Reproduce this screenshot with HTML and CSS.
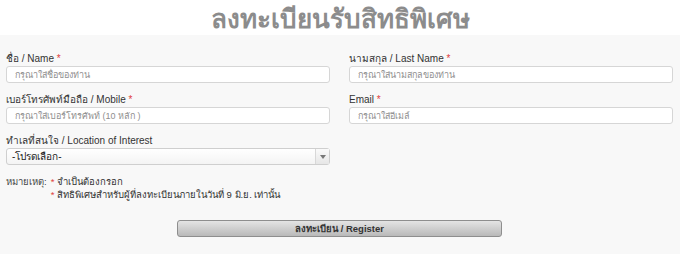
FILE: index.html
```html
<!DOCTYPE html>
<html lang="th">
<head>
<meta charset="UTF-8" />
<meta name="viewport" content="width=device-width, initial-scale=1" />
<title>ลงทะเบียนรับสิทธิพิเศษ</title>
<link rel="stylesheet" href="styles.css">
</head>
<body>

<h1 class="title">ลงทะเบียนรับสิทธิพิเศษ</h1>

<form class="reg-form">
  <div class="grid">
    <div class="field">
      <label for="fname">ชื่อ / Name <span class="req">*</span></label>
      <input type="text" id="fname" placeholder="กรุณาใส่ชื่อของท่าน" />
    </div>
    <div class="field">
      <label for="lname">นามสกุล / Last Name <span class="req">*</span></label>
      <input type="text" id="lname" placeholder="กรุณาใส่นามสกุลของท่าน" />
    </div>
    <div class="field">
      <label for="mobile">เบอร์โทรศัพท์มือถือ / Mobile <span class="req">*</span></label>
      <input type="text" id="mobile" placeholder="กรุณาใส่เบอร์โทรศัพท์ (10 หลัก )" />
    </div>
    <div class="field">
      <label for="email">Email <span class="req">*</span></label>
      <input type="text" id="email" placeholder="กรุณาใส่อีเมล์" />
    </div>
    <div class="field">
      <label for="location">ทำเลที่สนใจ / Location of Interest</label>
      <div class="select">
        <span class="select-text">-โปรดเลือก-</span>
        <span class="select-arrow"></span>
      </div>
    </div>
  </div>

  <div class="note">
    <span class="note-head">หมายเหตุ:</span>
    <div class="note-lines">
      <div><span class="req">*</span> จำเป็นต้องกรอก</div>
      <div><span class="req">*</span> สิทธิพิเศษสำหรับผู้ที่ลงทะเบียนภายในวันที่ 9 มิ.ย. เท่านั้น</div>
    </div>
  </div>

  <div class="actions">
    <button type="button" class="btn">ลงทะเบียน / Register</button>
  </div>
</form>

</body>
</html>
```

FILE: styles.css
```css
body { margin: 0; background: #f8f8f8; font-family: "Liberation Sans", Arial, sans-serif; color: #333; }
.title {
  margin: 0;
  height: 35px;
  background: #fff;
  text-align: center;
  font-family: "Liberation Serif", serif;
  font-size: 26px;
  line-height: 40px;
  font-weight: 600;
  color: #8c8c8c;
}
.reg-form { padding: 17px 7px 0 6px; }
.grid { display: grid; grid-template-columns: 1fr 1fr; column-gap: 19px; row-gap: 10px; }
.field label { display: block; font-size: 10px; line-height: 13px; margin-bottom: 1px; }
.req { color: #e0403c; }
.field input {
  display: block;
  width: 100%;
  box-sizing: border-box;
  height: 17px;
  border: 1px solid #d6d6d6;
  border-radius: 3px;
  background: #fff;
  padding: 0 8px;
  font-size: 9px;
  font-family: inherit;
}
.field input::placeholder { color: #8f8f8f; }
.select {
  display: flex;
  height: 17px;
  box-sizing: border-box;
  border: 1px solid #cfcfcf;
  border-radius: 3px;
  background: linear-gradient(#fff, #f4f4f4);
  font-size: 10px;
  align-items: stretch;
}
.select-text { flex: 1; padding-left: 5px; line-height: 15px; color: #222; }
.select-arrow {
  width: 13px;
  border-left: 1px solid #d8d8d8;
  background: linear-gradient(#fafafa, #e6e6e6);
  position: relative;
}
.select-arrow::after {
  content: "";
  position: absolute;
  left: 4px;
  top: 6px;
  border-left: 3px solid transparent;
  border-right: 3px solid transparent;
  border-top: 4px solid #777;
}
.note { display: flex; font-size: 9.5px; line-height: 13px; margin-top: 10px; gap: 4px; }
.note-head { color: #444; }
.actions { display: flex; justify-content: center; margin-top: 19px; }
.btn {
  width: 325px;
  height: 17px;
  border: 1px solid #8e8e8e;
  border-radius: 3px;
  background: linear-gradient(#e4e4e4, #b9b9b9);
  font-family: inherit;
  font-size: 9.5px;
  font-weight: bold;
  color: #333;
  padding: 0;
}
```
